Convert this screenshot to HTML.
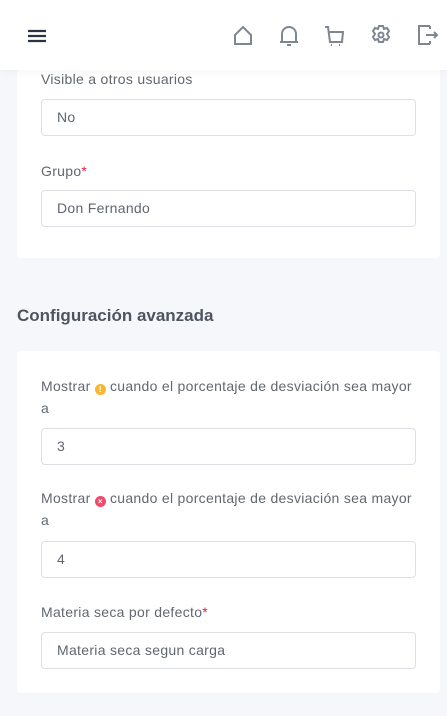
<!DOCTYPE html>
<html><head><meta charset="utf-8"><style>
*{box-sizing:border-box;margin:0;padding:0}
body{width:447px;height:716px;overflow:hidden;background:#f6f7fb;font-family:"Liberation Sans",sans-serif;position:relative;color:#5f6670}
.hdr{position:absolute;left:0;top:0;width:447px;height:70px;background:#fff;box-shadow:0 2px 8px rgba(0,0,0,.04);z-index:2}
.card{position:absolute;left:17px;width:423px;background:#fff;border-radius:4px}
.lbl{position:absolute;left:41px;font-size:14px;color:#62686f;line-height:22px;letter-spacing:0.3px}
.inp{position:absolute;left:41px;width:375px;height:37px;border:1px solid #dcdfe4;border-radius:4px;background:#fff;font-size:14px;color:#5f6670;padding:0 15px;line-height:35px;letter-spacing:0.3px}
.req{color:#e0203a}
svg{position:absolute}
.dot{display:inline-block;width:11px;height:11px;border-radius:50%;vertical-align:-1px;color:#fff;font-size:8px;line-height:11px;text-align:center;font-weight:bold;letter-spacing:0}
</style></head><body>
<div class="hdr">
<svg style="left:27px;top:29px" width="20" height="14"><path d="M1 2H19M1 7H19M1 12H19" stroke="#2b3242" stroke-width="2.2"/></svg>
<svg style="left:232px;top:24px" width="22" height="22" fill="none" stroke="#7d8791" stroke-width="2"><path d="M3 11L11 3L19 11V20H3Z"/></svg>
<svg style="left:278px;top:24px" width="22" height="24" fill="none" stroke="#7d8791" stroke-width="2"><path d="M4 18V10a7 7 0 0114 0v8H2h18M9 21h4"/></svg>
<svg style="left:324px;top:25px" width="22" height="22" fill="none" stroke="#7d8791" stroke-width="2"><path d="M1 2h3l2 15h12l1-10H5M7 20h1M15 20h1"/></svg>
<svg style="left:370px;top:24px" width="22" height="22" fill="none" stroke="#7d8791" stroke-width="2"><path d="M9 2h4l1 3 3-1 2 3-2 3 2 3-2 3-3-1-1 3H9l-1-3-3 1-2-3 2-3-2-3 2-3 3 1z"/><circle cx="11" cy="11" r="2.5"/></svg>
<svg style="left:417px;top:24px" width="22" height="22" fill="none" stroke="#7d8791" stroke-width="2"><path d="M13 2H2V20H13M13 5V2M13 20V17M9 11H20M17 8l3 3-3 3"/></svg>
</div>
<div class="card" style="top:40px;height:218px"></div>
<div class="lbl" style="top:68px">Visible a otros usuarios</div>
<div class="inp" style="top:99px">No</div>
<div class="lbl" style="top:160px">Grupo<span class="req">*</span></div>
<div class="inp" style="top:190px">Don Fernando</div>
<div style="position:absolute;left:17px;top:306px;font-size:17px;font-weight:bold;color:#4e5560">Configuración avanzada</div>
<div class="card" style="top:351px;height:342px"></div>
<div class="lbl" style="top:375px;width:372px">Mostrar <span class="dot" style="background:#f7b733">!</span> cuando el porcentaje de desviación sea mayor a</div>
<div class="inp" style="top:428px">3</div>
<div class="lbl" style="top:487px;width:372px">Mostrar <span class="dot" style="background:#ef4a6a">×</span> cuando el porcentaje de desviación sea mayor a</div>
<div class="inp" style="top:541px">4</div>
<div class="lbl" style="top:601px">Materia seca por defecto<span class="req">*</span></div>
<div class="inp" style="top:632px">Materia seca segun carga</div>
</body></html>
